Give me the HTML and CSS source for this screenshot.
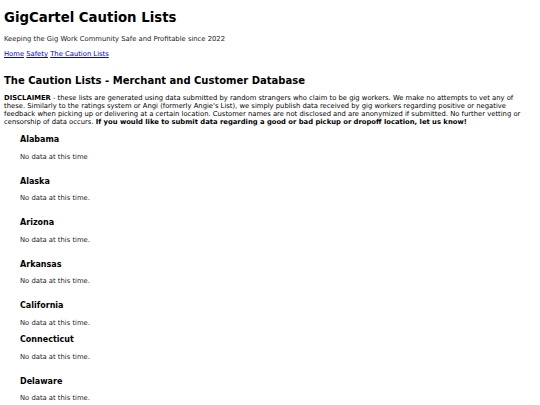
FILE: index.html
```html
<!DOCTYPE html>
<html lang="en">
<head>
<meta charset="utf-8">
<title>GigCartel Caution Lists</title>
<link rel="stylesheet" href="styles.css">
</head>
<body>
<header class="site-header">
  <h1 class="site-title">GigCartel Caution Lists</h1>
  <p class="tagline">Keeping the Gig Work Community Safe and Profitable since 2022</p>
  <nav class="nav"><a href="#">Home</a> <a href="#">Safety</a> <a href="#">The Caution Lists</a></nav>
</header>
<main class="content">
  <h2 class="page-title">The Caution Lists - Merchant and Customer Database</h2>
  <p class="disclaimer"><strong>DISCLAIMER</strong> - these lists are generated using data submitted by random strangers who claim to be gig workers. We make no attempts to vet any of these. Similarly to the ratings system or Angi (formerly Angie's List), we simply publish data received by gig workers regarding positive or negative feedback when picking up or delivering at a certain location. Customer names are not disclosed and are anonymized if submitted. No further vetting or censorship of data occurs. <strong>If you would like to submit data regarding a good or bad pickup or dropoff location, let us know!</strong></p>
  <div class="states">
    <section class="state"><h3 class="state-name">Alabama</h3><p class="state-data">No data at this time</p></section>
    <section class="state"><h3 class="state-name">Alaska</h3><p class="state-data">No data at this time.</p></section>
    <section class="state"><h3 class="state-name">Arizona</h3><p class="state-data">No data at this time.</p></section>
    <section class="state"><h3 class="state-name">Arkansas</h3><p class="state-data">No data at this time.</p></section>
    <section class="state state-tight"><h3 class="state-name">California</h3><p class="state-data">No data at this time.</p></section>
    <section class="state"><h3 class="state-name">Connecticut</h3><p class="state-data">No data at this time.</p></section>
    <section class="state"><h3 class="state-name">Delaware</h3><p class="state-data">No data at this time.</p></section>
  </div>
</main>
</body>
</html>
```

FILE: styles.css
```css
html, body {
  margin: 0;
  padding: 0;
  background: #fff;
}
body {
  padding: 0 4px;
  font-family: "DejaVu Sans", Verdana, sans-serif;
  font-size: 6.8px;
  color: #000;
}
.site-title {
  margin: 10px 0 0;
  font-size: 13.3px;
  line-height: 16px;
  font-weight: bold;
}
.tagline {
  margin: 9px 0 0;
  line-height: 8px;
  color: #222;
}
.nav {
  margin-top: 7px;
  line-height: 8px;
}
.nav a {
  color: #0000ee;
}
.page-title {
  margin: 17px 0 0;
  font-size: 10px;
  line-height: 12px;
  font-weight: bold;
}
.disclaimer {
  margin: 7px 0 0;
  line-height: 8px;
}
.states {
  padding-left: 16px;
  margin-top: 8px;
}
.state-name {
  margin: 0;
  font-size: 8px;
  line-height: 12px;
  font-weight: bold;
}
.state-data {
  margin: 6.5px 0 0;
  line-height: 8px;
  color: #222;
}
.state {
  margin-bottom: 15px;
}
.state-tight {
  margin-bottom: 7.5px;
}
```
